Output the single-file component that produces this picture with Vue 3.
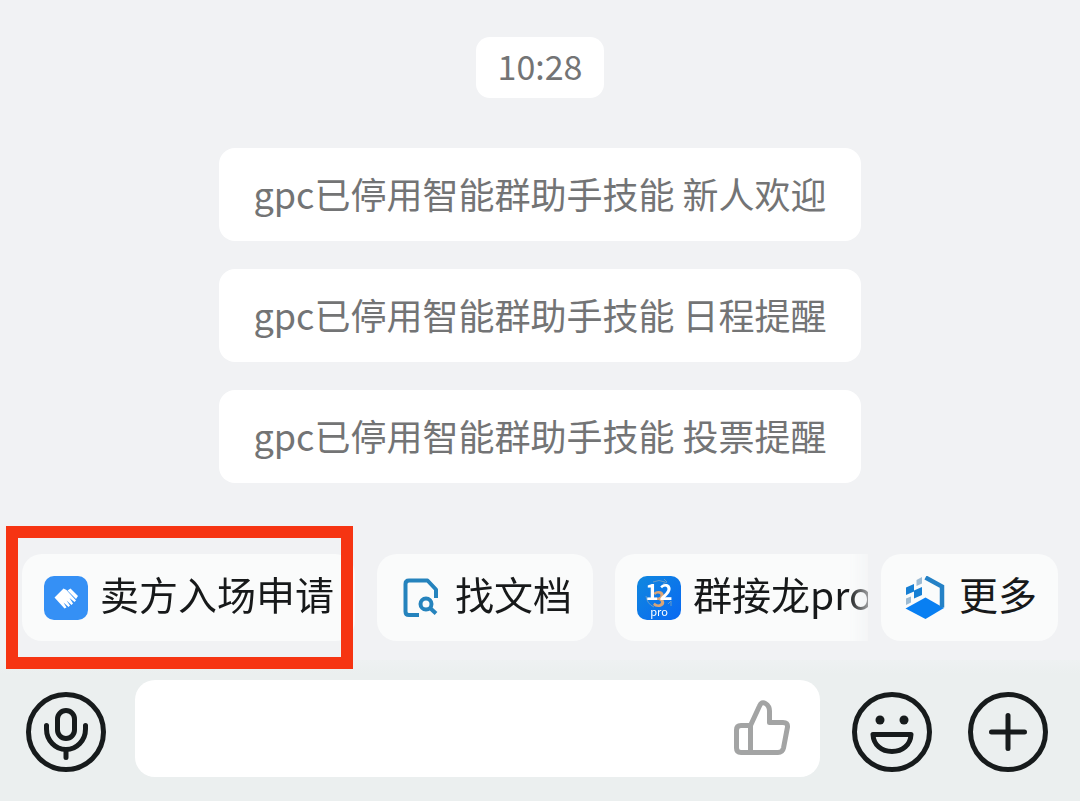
<script setup>
import { ref } from 'vue'

const time = '10:28'
const notices = [
  'gpc已停用智能群助手技能 新人欢迎',
  'gpc已停用智能群助手技能 日程提醒',
  'gpc已停用智能群助手技能 投票提醒',
]
const draft = ref('')
</script>

<template>
  <div class="screen">
    <main class="chat">
      <time class="time">{{ time }}</time>
      <p v-for="n in notices" :key="n" class="notice">{{ n }}</p>
    </main>

    <nav class="shortcuts" aria-label="快捷入口">
      <div class="scroller">
        <button type="button" class="chip">
          <svg class="chip-icon" viewBox="0 0 44 44" aria-hidden="true">
            <rect width="44" height="44" rx="10" fill="#3590f5" />
            <path d="M10.500 21.500 19.500 12.500 22.500 14 32 24.500 30.500 26 25.500 22 29 27.500 27.500 29 22.500 24.500 26 29.500 24.500 31 19.500 26.500 22.500 31.500 20.500 32.500Z" fill="#fff" />
            <path d="M23.500 14.500 26.500 12.500 34 20 32 23Z" fill="#fff" />
          </svg>
          <span class="label">卖方入场申请</span>
        </button>
        <button type="button" class="chip">
          <svg class="chip-icon" viewBox="0 0 44 44" fill="none" stroke="#2583bd" stroke-width="4" aria-hidden="true">
            <path d="M20 39H10Q6.500 39 6.500 35.500V8Q6.500 4.500 10 4.500H28.500L37 13.500V22" stroke-linejoin="round" />
            <circle cx="27" cy="28" r="5.500" />
            <path d="M31 32 37 37.500" />
          </svg>
          <span class="label">找文档</span>
        </button>
        <button type="button" class="chip">
          <svg class="chip-icon" viewBox="0 0 44 44" aria-hidden="true">
            <defs>
              <linearGradient id="relay" x1="0" y1="0" x2="1" y2="1">
                <stop offset="0" stop-color="#1088df" />
                <stop offset="1" stop-color="#0968f2" />
              </linearGradient>
            </defs>
            <rect width="44" height="44" rx="10" fill="url(#relay)" />
            <path d="M16 6Q22 3 28 6M9 20Q10 28 17 31M31 28l3-3v5M27 3l3 3-4 2" fill="none" stroke="#6b9cc4" stroke-width="1" />
            <text x="22" y="31" class="digit three">3</text>
            <text x="15" y="24" class="digit">1</text>
            <text x="29" y="24" class="digit">2</text>
            <text x="22" y="40" class="tag">pro</text>
          </svg>
          <span class="label">群接龙pro</span>
        </button>
      </div>
      <button type="button" class="chip">
        <svg class="chip-icon" viewBox="0 0 44 44" aria-hidden="true">
          <path d="M2.500 32.500 22.500 21.500 41 32 22.500 43Z" fill="#087ff2" />
          <path d="M22.500 1.500 39 10.500V31.500" fill="none" stroke="#2481c6" stroke-width="4.500" />
          <path d="M3 11.500 11 8V15.500L3 19ZM11 14.500 19 11V19L11 22.500Z" fill="#167fd4" />
          <path d="M13.500 4 19 1V7.500L13.500 10ZM3 22.500 8 20.500V26.500L3 29Z" fill="#9dbbd3" />
        </svg>
        <span class="label">更多</span>
      </button>
      <div class="highlight" aria-hidden="true"></div>
    </nav>

    <footer class="composer">
      <button type="button" class="round" aria-label="语音输入">
        <svg viewBox="0 0 80 80" class="line">
          <circle cx="40" cy="40" r="37.500" />
          <rect x="31.500" y="18.500" width="17" height="28" rx="8.500" />
          <path d="M20.500 33.500V37a19.500 20.500 0 0 0 39 0V33.500M40 58v7.500" stroke-linecap="round" />
        </svg>
      </button>
      <div class="field">
        <input v-model="draft" type="text" aria-label="消息" />
        <button type="button" class="like" aria-label="点赞">
          <svg viewBox="0 0 58 58">
            <path d="M17.500 52.500H8Q3.500 52.500 3.500 48V30Q3.500 25.500 8 25.500H17.500ZM17.500 52.500V25.500L26.500 6Q28.500 1 32.500 3.500Q36.500 6 36.500 11V22.500H50Q55 22.500 54.500 27L50.500 48Q49.500 52.500 45 52.500Z" />
          </svg>
        </button>
      </div>
      <button type="button" class="round" aria-label="表情">
        <svg viewBox="0 0 80 80" class="line">
          <circle cx="40" cy="40" r="37.500" />
          <circle cx="28" cy="28" r="4.500" class="dot" />
          <circle cx="52" cy="28" r="4.500" class="dot" />
          <path d="M21 42.500H59C58.500 53 50.500 59.500 40 59.500S21.500 53 21 42.500Z" stroke-linejoin="round" />
        </svg>
      </button>
      <button type="button" class="round" aria-label="更多功能">
        <svg viewBox="0 0 80 80" class="line">
          <circle cx="40" cy="40" r="37.500" />
          <path d="M23.500 40H56.500M40 23.500V56.500" stroke-linecap="round" />
        </svg>
      </button>
    </footer>
  </div>
</template>

<style>
body {
  margin: 0;
  background: #ebefef;
}
</style>

<style scoped>
.screen {
  display: flex;
  flex-direction: column;
  min-height: 100vh;
  background: #f1f2f4;
  font-family: "Noto Sans CJK SC", sans-serif;
}

button {
  padding: 0;
  border: 0;
  background: none;
  font: inherit;
  color: inherit;
}

svg {
  display: block;
  width: 100%;
  height: 100%;
}

.chat {
  flex: 1;
  display: flex;
  flex-direction: column;
  align-items: center;
  gap: 28px;
  padding: 37px 20px 71px;
  color: #737475;
}

.time {
  padding: 0 22px 3px;
  margin-bottom: 22px;
  border-radius: 14px;
  background: #fff;
  font-size: 34px;
  line-height: 58px;
}

.notice {
  margin: 0;
  padding: 0 34px 3px;
  border-radius: 16px;
  background: #fff;
  font-size: 36px;
  line-height: 90px;
}

.shortcuts {
  position: relative;
  display: flex;
  gap: 13px;
  padding: 0 22px 19px;
}

.scroller {
  flex: 1;
  min-width: 0;
  display: flex;
  gap: 22px;
  overflow: hidden;
  mask-image: linear-gradient(to left, rgba(0, 0, 0, 0.4), #000 20px);
}

.chip {
  flex: none;
  display: flex;
  align-items: center;
  gap: 12px;
  height: 87px;
  padding: 0 21px 0 22px;
  border-radius: 20px;
  background: #fafbfb;
  color: #17191a;
  font-size: 39px;
  line-height: 60px;
  white-space: nowrap;
}

.chip-icon {
  flex: none;
  width: 44px;
  height: 44px;
}

.label {
  padding-bottom: 9px;
}

.digit {
  font: bold 22px "Noto Sans CJK SC", sans-serif;
  fill: #fff;
  text-anchor: middle;
}

.three {
  fill: #d9a477;
}

.tag {
  font: 11px "Noto Sans CJK SC", sans-serif;
  fill: #fff;
  text-anchor: middle;
}

.highlight {
  position: absolute;
  top: -28px;
  left: 6px;
  width: 347px;
  height: 143px;
  box-sizing: border-box;
  border: 12px solid #f63412;
  pointer-events: none;
}

.composer {
  display: flex;
  align-items: center;
  gap: 36px;
  padding: 20px 32px 24px 26px;
  background: linear-gradient(#eef1f2, #ebefef 14px);
}

.round {
  flex: none;
  width: 80px;
  height: 80px;
  margin-top: 6px;
}

.line {
  fill: none;
  stroke: #171b1c;
  stroke-width: 5;
}

.line .dot {
  fill: #171b1c;
  stroke: none;
}

.field {
  flex: 1;
  min-width: 0;
  display: flex;
  align-items: center;
  height: 97px;
  margin: 0 -4px 0 -7px;
  padding-right: 29px;
  box-sizing: border-box;
  border-radius: 20px;
  background: #fff;
}

.field input {
  flex: 1;
  min-width: 0;
  height: 100%;
  padding: 0 24px;
  border: 0;
  outline: 0;
  background: none;
  color: #17191a;
  font: 36px "Noto Sans CJK SC", sans-serif;
}

.like {
  flex: none;
  width: 58px;
  height: 58px;
}

.like path {
  fill: none;
  stroke: #a3a4a4;
  stroke-width: 5;
  stroke-linejoin: round;
}
</style>
